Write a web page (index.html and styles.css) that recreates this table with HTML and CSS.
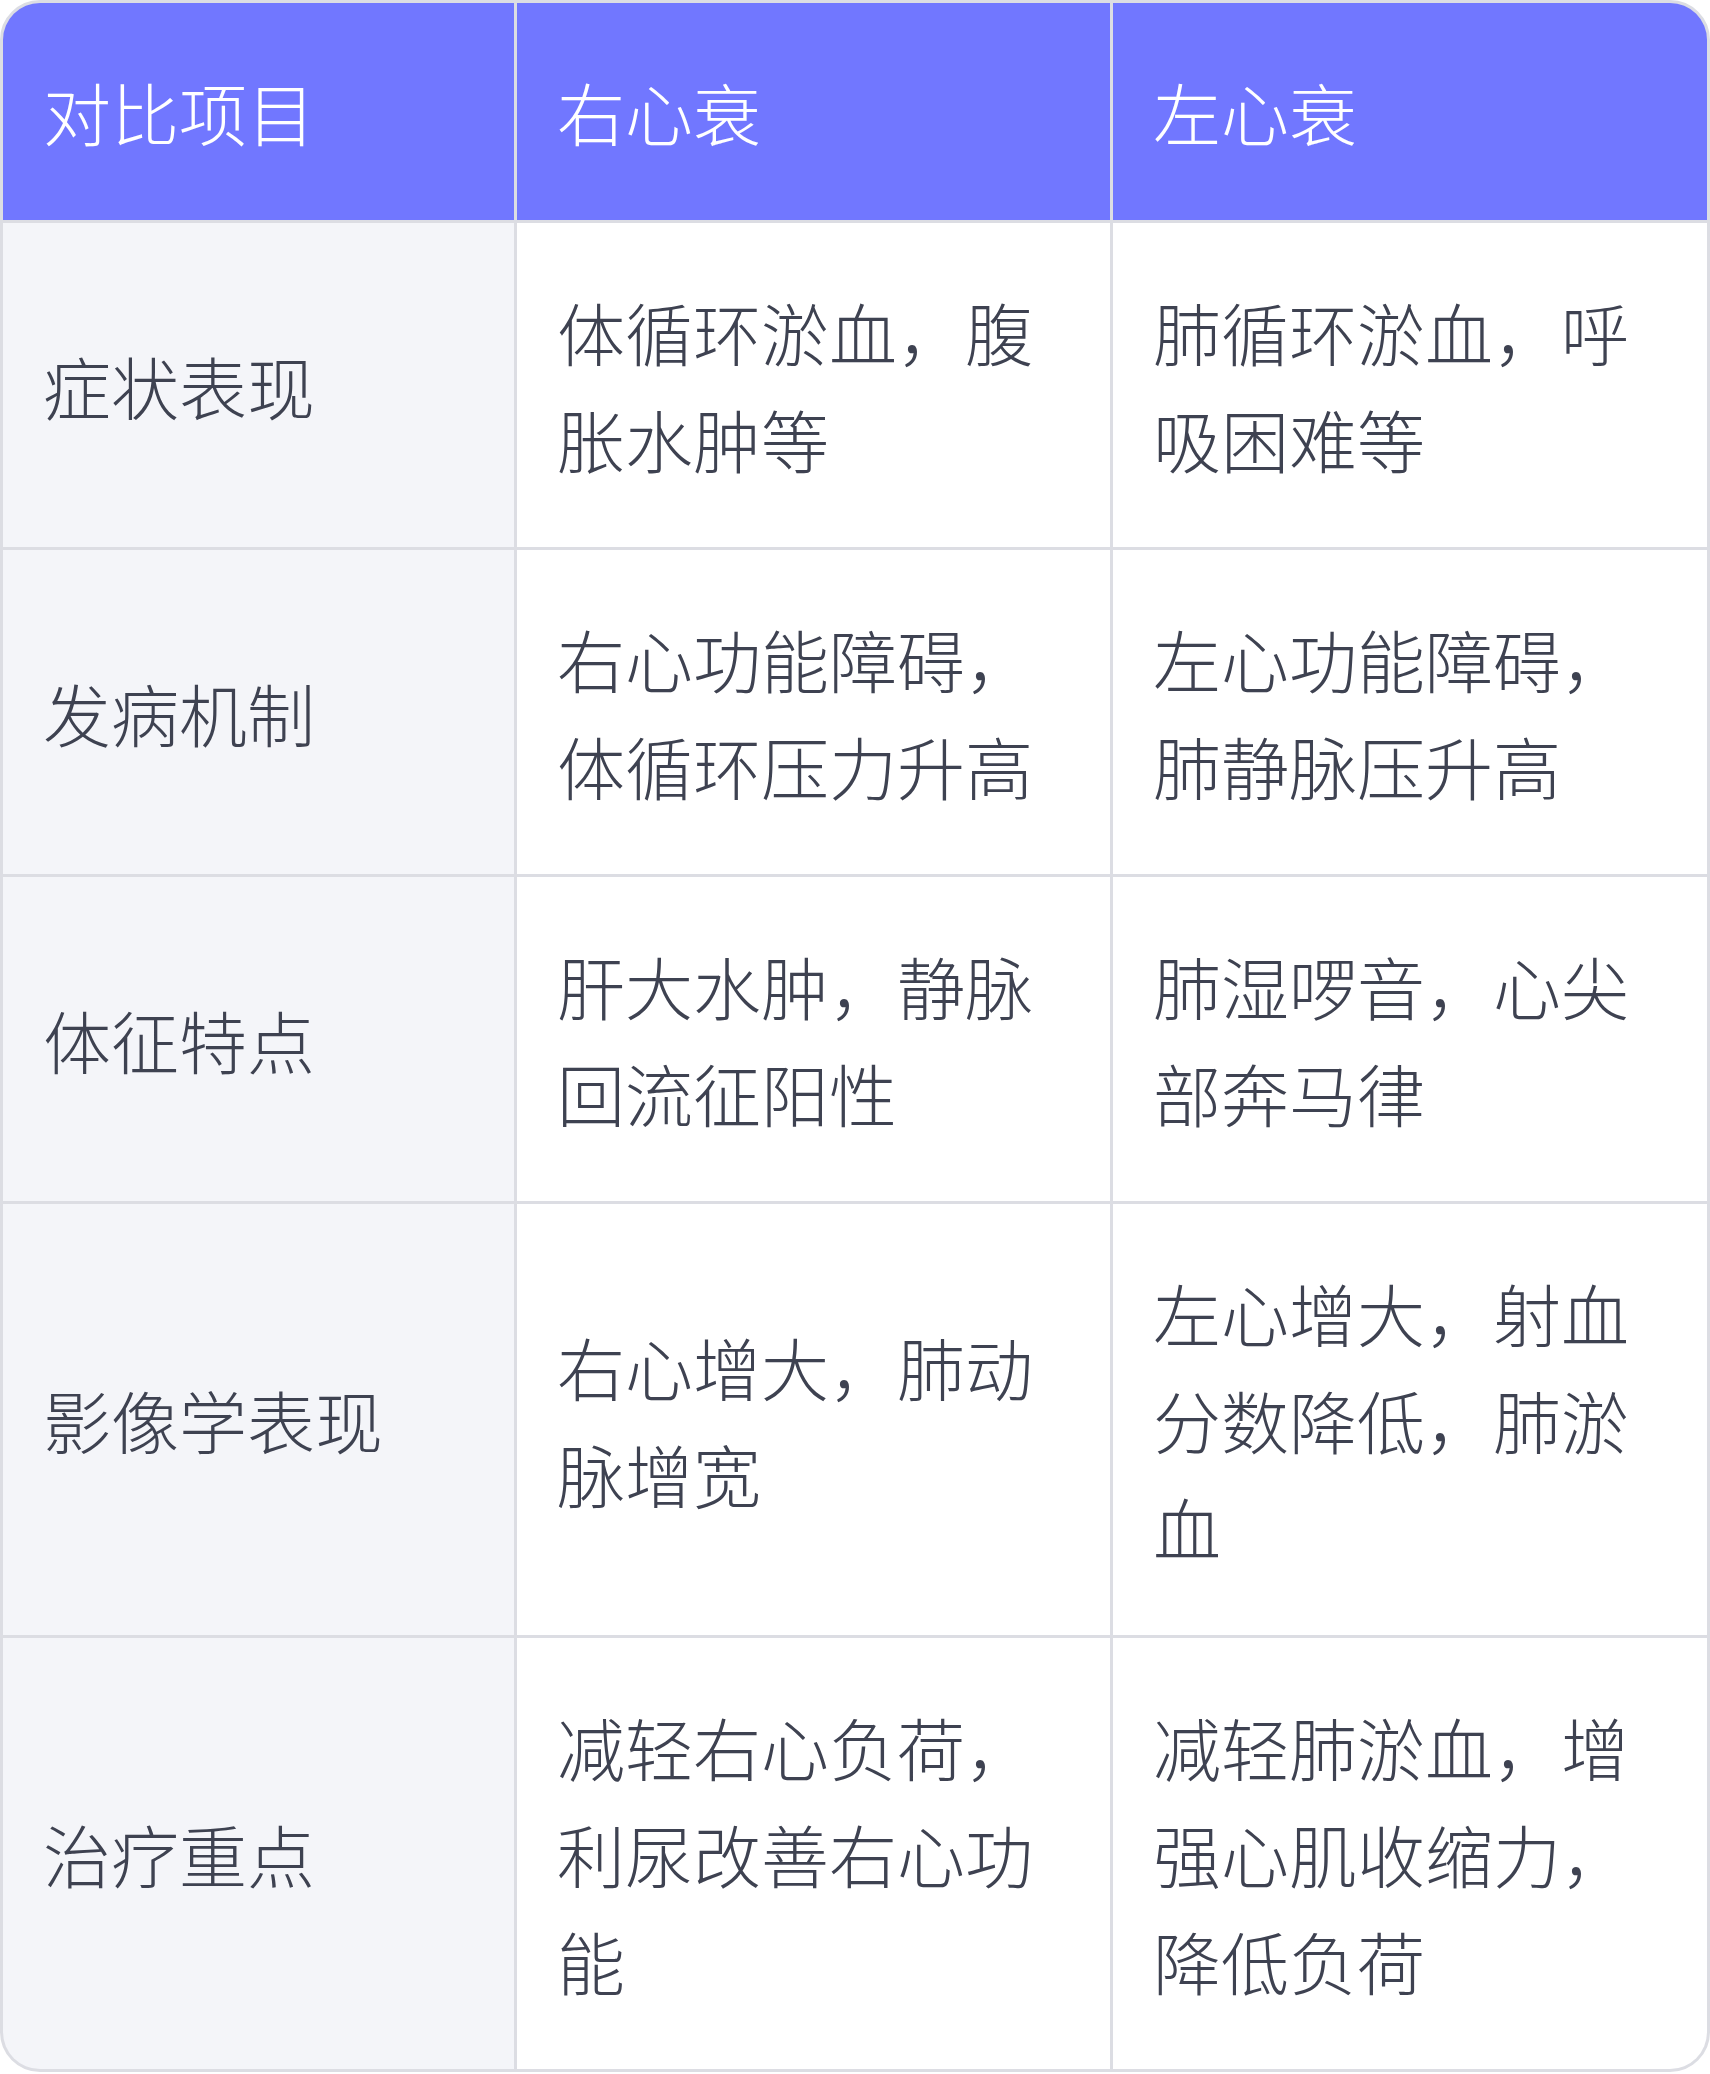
FILE: index.html
```html
<!DOCTYPE html>
<html lang="zh-CN">
<head>
<meta charset="utf-8">
<title>右心衰与左心衰对比</title>
<link rel="stylesheet" href="styles.css">
</head>
<body>
<div class="table">
  <div class="cell head">对比项目</div>
  <div class="cell head">右心衰</div>
  <div class="cell head">左心衰</div>

  <div class="cell label">症状表现</div>
  <div class="cell">体循环淤血，腹胀水肿等</div>
  <div class="cell">肺循环淤血，呼吸困难等</div>

  <div class="cell label">发病机制</div>
  <div class="cell">右心功能障碍，体循环压力升高</div>
  <div class="cell">左心功能障碍，肺静脉压升高</div>

  <div class="cell label">体征特点</div>
  <div class="cell">肝大水肿，静脉回流征阳性</div>
  <div class="cell">肺湿啰音，心尖部奔马律</div>

  <div class="cell label">影像学表现</div>
  <div class="cell">右心增大，肺动脉增宽</div>
  <div class="cell">左心增大，射血分数降低，肺淤血</div>

  <div class="cell label">治疗重点</div>
  <div class="cell">减轻右心负荷，利尿改善右心功能</div>
  <div class="cell">减轻肺淤血，增强心肌收缩力，降低负荷</div>
</div>
</body>
</html>
```
FILE: styles.css
```css
html, body {
  margin: 0;
  padding: 0;
  background: #ffffff;
}

.table {
  box-sizing: border-box;
  width: 1710px;
  border: 3px solid #dcdde3;
  border-radius: 40px;
  overflow: hidden;
  display: grid;
  grid-template-columns: 511px 593px 1fr;
  gap: 3px;
  background: #dcdde3;
  font-family: "Noto Sans CJK SC", "Noto Sans", sans-serif;
  font-size: 68px;
  line-height: 107px;
  font-weight: 300;
  color: #3e4251;
}

.cell {
  display: flex;
  align-items: center;
  padding: 55px 40px;
  background: #ffffff;
  word-break: break-all;
}

.head {
  background: #7177ff;
  color: #ffffff;
}

.label {
  background: #f4f5f9;
}
```
